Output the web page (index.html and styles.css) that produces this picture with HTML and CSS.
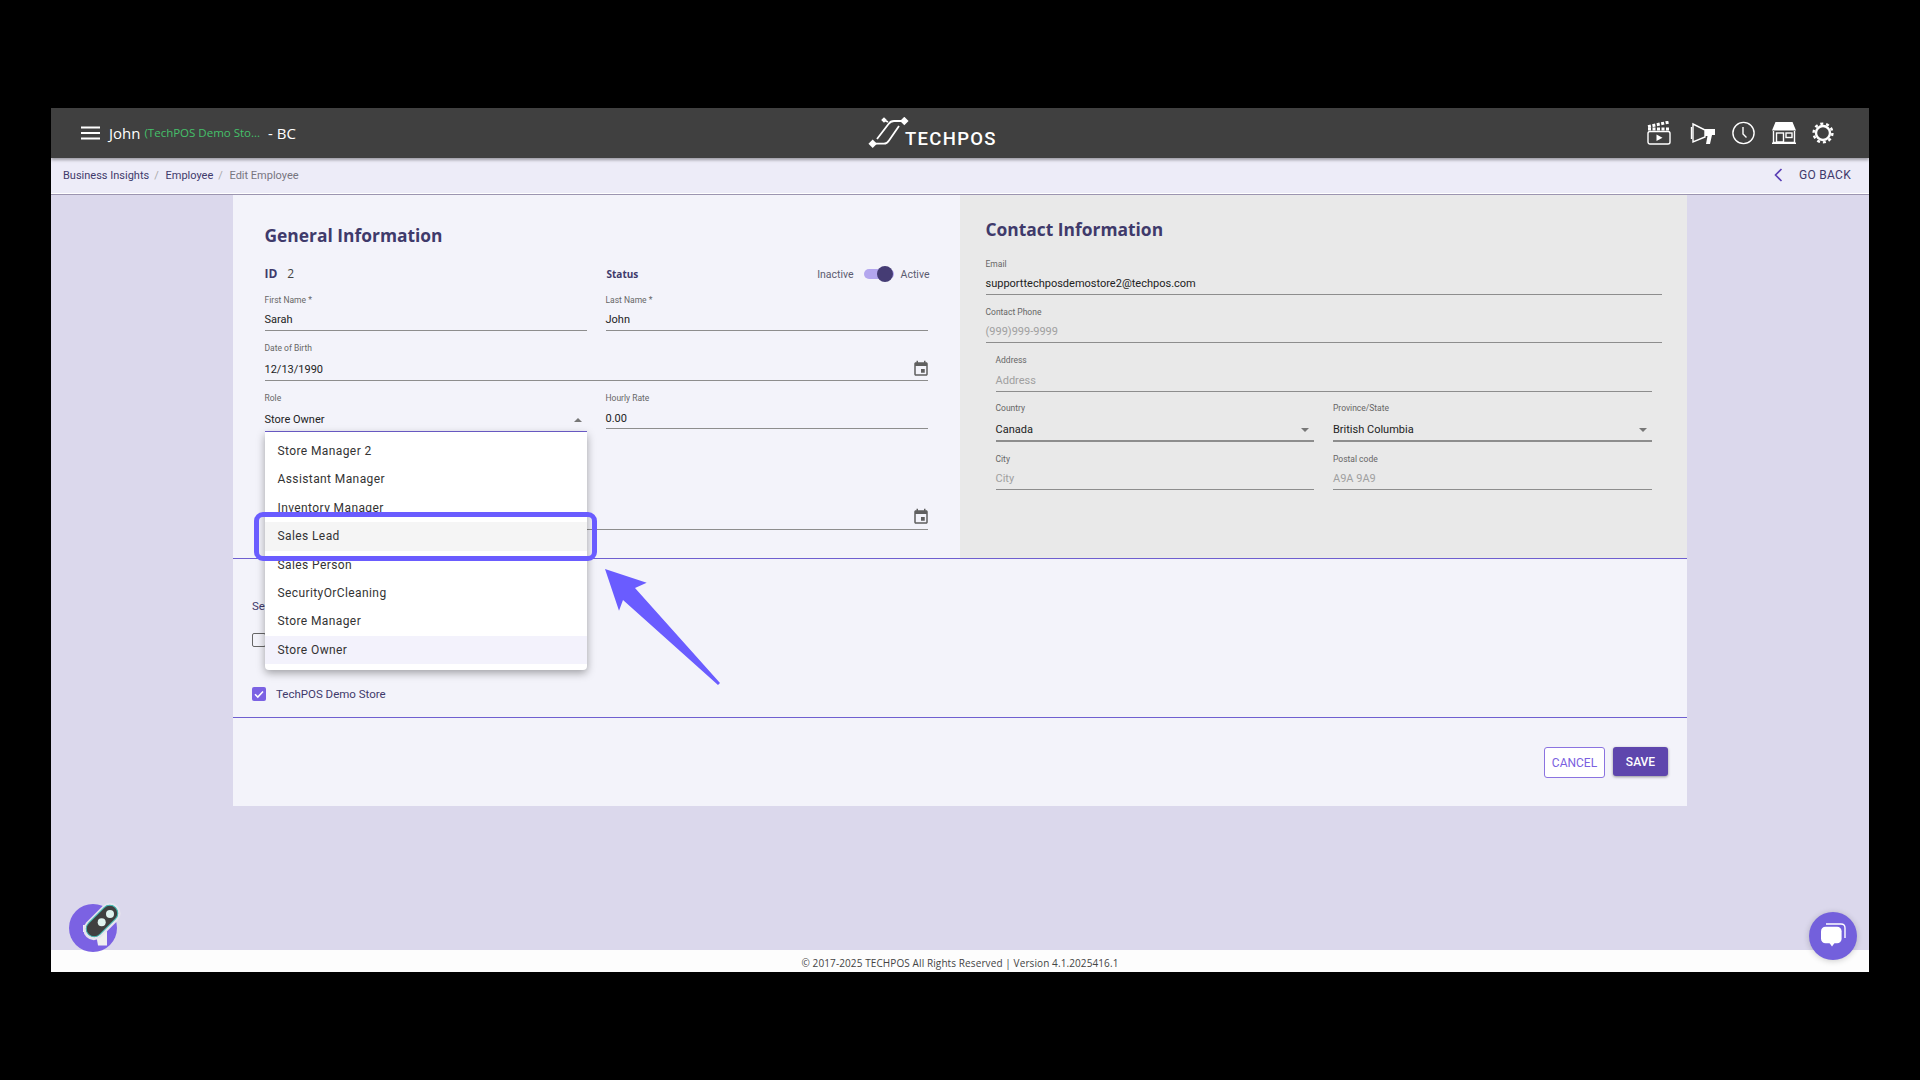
FILE: index.html
```html
<!DOCTYPE html>
<html lang="en">
<head>
<meta charset="utf-8"/>
<title>Edit Employee</title>
<link rel="stylesheet" href="styles.css">
</head>
<body>
<div class="app">

  <!-- top bar -->
  <header class="top-bar">
    <div class="user-box">
      <svg class="menu-icon" viewBox="0 0 19 14"><path d="M0 1.5h19M0 7h19M0 12.5h19"></path></svg>
      <span class="user-name">John</span>
      <span class="store-name">(TechPOS Demo Sto...</span>
      <span class="user-region">- BC</span>
    </div>
    <div class="logo">
      <svg class="logo-mark" viewBox="5 5 43 34">
        <path d="M10.7 31.7H22Q25 31.7 27 28.5L37 14M42 9H32Q28.5 9 26.5 12L15 27M22 8L26 10"></path>
        <rect x="7.7" y="28.7" width="6" height="6" transform="rotate(45 10.7 31.7)"></rect>
        <rect x="39.3" y="6" width="6" height="6" transform="rotate(45 42.3 9)"></rect>
        <rect x="20" y="6" width="4" height="4" transform="rotate(45 22 8)"></rect>
      </svg>
      <span class="logo-text">TECHPOS</span>
    </div>
    <div class="top-icons">
      <svg class="icon-clapper" viewBox="0 0 24 24">
        <rect class="line" x="1" y="10.5" width="22" height="12.5" rx="2"></rect>
        <path class="dash" d="M1 8h22"></path>
        <path class="dash" d="M1 5.6L22.5 1"></path>
        <path class="solid" d="M9.5 13.5l6 3.2-6 3.2z"></path>
      </svg>
      <svg class="icon-mega" viewBox="0 0 28 24">
        <path class="line" d="M6 3L18 9V16L6 21Z"></path>
        <path class="line" d="M4.5 6V18"></path>
        <path class="solid" d="M18 8H28V14H25L23 23H19L20.5 15H18Z"></path>
      </svg>
      <svg class="icon-clock" viewBox="0 0 25 24">
        <circle class="line" cx="12.5" cy="12" r="10.6"></circle>
        <path class="line" d="M12 6V13L15.5 16.5"></path>
      </svg>
      <svg class="icon-store" viewBox="0 0 24 22">
        <path class="solid" d="M3.5 0H20.5L24 8.5H0Z"></path>
        <path class="line" d="M1.5 9V20.5H22.5V9"></path>
        <rect class="line" x="4.5" y="11" width="7" height="9"></rect>
        <rect class="line" x="14" y="11" width="6" height="4.5"></rect>
        <path class="solid" d="M0 20.5H24V22H0Z"></path>
      </svg>
      <svg class="icon-gear" viewBox="0 0 22 22">
        <circle class="ring" cx="11" cy="11" r="7"></circle>
        <circle class="teeth" cx="11" cy="11" r="9.4"></circle>
      </svg>
    </div>
  </header>

  <!-- breadcrumb -->
  <div class="crumb-bar">
    <div class="crumbs">
      <span>Business Insights</span><i>/</i>
      <span class="crumb-gap">Employee</span><i>/</i>
      <span class="crumb-current">Edit Employee</span>
    </div>
    <div class="go-back">
      <svg viewBox="0 0 9 14"><path d="M7.5 1L1.5 7l6 6"></path></svg>
      <span>GO BACK</span>
    </div>
  </div>

  <main class="page">
    <div class="panel">
      <div class="info-row">

        <section class="general">
          <h2>General Information</h2>
          <div class="meta-row">
            <div class="meta-id"><b>ID</b><span>2</span></div>
            <div class="meta-status">
              <b>Status</b>
              <span class="toggle-text toggle-first">Inactive</span>
              <span class="toggle"><span class="toggle-thumb"></span></span>
              <span class="toggle-text">Active</span>
            </div>
          </div>

          <div class="two-col first-row">
            <div class="field">
              <label>First Name *</label>
              <div class="value tight">Sarah</div>
            </div>
            <div class="field">
              <label>Last Name *</label>
              <div class="value tight">John</div>
            </div>
          </div>

          <div class="field">
            <label>Date of Birth</label>
            <div class="value loose">12/13/1990
              <svg class="calendar" viewBox="0 0 24 24"><path d="M17 12h-5v5h5v-5zM16 1v2H8V1H6v2H5c-1.11 0-1.99.9-1.99 2L3 19c0 1.1.89 2 2 2h14c1.1 0 2-.9 2-2V5c0-1.1-.9-2-2-2h-1V1h-2zm3 18H5V8h14v11z"></path></svg>
            </div>
          </div>

          <div class="two-col role-row">
            <div class="field role-field">
              <label>Role</label>
              <div class="value loose">Store Owner<span class="caret caret-up"></span></div>
              <ul class="role-menu">
                <li>Store Manager 2</li>
                <li>Assistant Manager</li>
                <li>Inventory Manager</li>
                <li class="hovered">Sales Lead</li>
                <li>Sales Person</li>
                <li>SecurityOrCleaning</li>
                <li>Store Manager</li>
                <li class="selected">Store Owner</li>
              </ul>
            </div>
            <div class="field rate-field">
              <label>Hourly Rate</label>
              <div class="value">0.00</div>
            </div>
          </div>

          <div class="field date-field">
            <div class="value">
              <svg class="calendar" viewBox="0 0 24 24"><path d="M17 12h-5v5h5v-5zM16 1v2H8V1H6v2H5c-1.11 0-1.99.9-1.99 2L3 19c0 1.1.89 2 2 2h14c1.1 0 2-.9 2-2V5c0-1.1-.9-2-2-2h-1V1h-2zm3 18H5V8h14v11z"></path></svg>
            </div>
          </div>
        </section>

        <section class="contact">
          <h2>Contact Information</h2>
          <div class="field email-field">
            <label>Email</label>
            <div class="value tight">supporttechposdemostore2@techpos.com</div>
          </div>
          <div class="field">
            <label>Contact Phone</label>
            <div class="value tight muted">(999)999-9999</div>
          </div>
          <div class="address">
            <div class="field">
              <label>Address</label>
              <div class="value muted">Address</div>
            </div>
            <div class="two-col">
              <div class="field select-field">
                <label>Country</label>
                <div class="value loose">Canada<span class="caret"></span></div>
              </div>
              <div class="field select-field">
                <label>Province/State</label>
                <div class="value loose">British Columbia<span class="caret"></span></div>
              </div>
            </div>
            <div class="two-col">
              <div class="field">
                <label>City</label>
                <div class="value tight muted">City</div>
              </div>
              <div class="field">
                <label>Postal code</label>
                <div class="value tight muted">A9A 9A9</div>
              </div>
            </div>
          </div>
        </section>
      </div>

      <section class="stores">
        <div class="stores-title">Select Store</div>
        <div class="store-row first-store"><span class="check"></span></div>
        <div class="store-row">
          <span class="check checked"><svg viewBox="0 0 14 14"><path d="M3 7.2l2.8 2.8L11 4.5"></path></svg></span>
          <span>TechPOS Demo Store</span>
        </div>
      </section>

      <div class="actions">
        <button class="btn-cancel">CANCEL</button>
        <button class="btn-save">SAVE</button>
      </div>
    </div>
  </main>

  <footer class="bottom-bar">© 2017-2025 TECHPOS All Rights Reserved | Version 4.1.2025416.1</footer>

  <!-- floating buttons -->
  <svg class="rocket" viewBox="0 0 60 60">
    <circle cx="30" cy="30" r="24" fill="#7b62e3"></circle>
    <rect x="20" y="27" width="3" height="7" fill="#f0eef8"></rect>
    <path d="M33 36L44 33V47.5H35Z" fill="#efefef"></path>
    <rect x="17" y="13" width="44" height="21" rx="10.5" transform="rotate(-45 39 23.5)" fill="#e6e4ee"></rect>
    <rect x="20" y="15" width="38" height="16" rx="8" transform="rotate(-45 39 23)" fill="#404040" stroke="#3fb8b0" stroke-width="1"></rect>
    <circle cx="38.7" cy="24.3" r="4" fill="#dff3ef"></circle>
    <circle cx="47" cy="16" r="4" fill="#dff3ef"></circle>
  </svg>
  <div class="chat-button">
    <svg viewBox="0 0 48 48">
      <path d="M17 12H32Q36 12 36 16V26" fill="none" stroke="#fff" stroke-width="1.4"></path>
      <rect x="12" y="14.7" width="20.6" height="16.5" rx="4.5" fill="#fff"></rect>
      <path d="M20.5 31h5L23 34.5z" fill="#fff"></path>
    </svg>
  </div>

  <!-- annotation -->
  <div class="mark-box"></div>
  <svg class="mark-arrow" viewBox="0 0 120 120">
    <path d="M2 2L43.7 15.7L32 21L117 116L115 118L20 33L16 43.7Z"></path>
  </svg>
</div>
</body>
</html>
```

FILE: styles.css
```css
* {
  box-sizing: border-box;
}

body {
  margin: 0;
  height: 1080px;
  padding: 108px 51px;
  background: #000;
  font-family: Roboto, "Liberation Sans", sans-serif;
  overflow: hidden;
}

.app {
  position: relative;
  display: flex;
  flex-direction: column;
  width: 1818px;
  height: 864px;
  background: #dbd8ec;
}

/* top bar */
.top-bar {
  display: flex;
  height: 50px;
  padding: 0 35px 0 30px;
  background: #404040;
  box-shadow: 0 2px 3px rgba(0, 0, 0, 0.35);
  position: relative;
  z-index: 2;
}

.user-box {
  display: flex;
  align-items: center;
  width: 786px;
  color: #fff;
  font-family: "Open Sans", sans-serif;
  font-size: 15px;
  font-weight: 500;
}

.menu-icon {
  width: 19px;
  height: 14px;
  margin: 0 9px 0 0;
}

.menu-icon path {
  stroke: #fff;
  stroke-width: 2;
}

.store-name {
  margin: -2px 8px 0 4px;
  color: #45c06a;
  font-size: 11.5px;
  font-weight: 400;
}

.logo {
  display: flex;
  align-items: flex-start;
  padding-top: 9px;
}

.logo-mark {
  width: 43px;
  height: 34px;
  margin-right: -5px;
}

.logo-mark path {
  fill: none;
  stroke: #fff;
  stroke-width: 1.8;
}

.logo-mark rect {
  fill: #fff;
}

.logo-text {
  margin-top: 14px;
  color: #fff;
  font-size: 18.5px;
  font-weight: 500;
  line-height: 16px;
  letter-spacing: 1.3px;
}

.top-icons {
  display: flex;
  align-items: center;
  gap: 16px;
  margin-left: auto;
}

.top-icons .line {
  fill: none;
  stroke: #fff;
  stroke-width: 1.4;
}

.top-icons .solid {
  fill: #fff;
}

.top-icons .dash {
  fill: none;
  stroke: #fff;
  stroke-width: 3;
  stroke-dasharray: 3 1.5;
}

.icon-clapper {
  width: 24px;
  height: 24px;
}

.icon-mega {
  width: 28px;
  height: 24px;
}

.icon-clock {
  width: 25px;
  height: 24px;
}

.icon-store {
  width: 24px;
  height: 22px;
}

.icon-gear {
  width: 22px;
  height: 22px;
}

.icon-gear .ring {
  fill: none;
  stroke: #fff;
  stroke-width: 2.4;
}

.icon-gear .teeth {
  fill: none;
  stroke: #fff;
  stroke-width: 2.4;
  stroke-dasharray: 3 2.9;
}

/* breadcrumb */
.crumb-bar {
  display: flex;
  align-items: center;
  justify-content: space-between;
  height: 37px;
  padding: 0 18px 2px 12px;
  background: #edecf8;
  border-bottom: 1px solid #9c95b0;
  box-shadow: inset 0 -1px 0 #fff;
  font-size: 11px;
  color: #3f3a6b;
}

.crumbs i {
  margin-left: 5px;
  color: #aaa;
  font-style: normal;
}

.crumb-gap {
  margin-left: 4px;
}

.crumb-current {
  margin-left: 4px;
  color: #77757f;
}

.go-back {
  display: flex;
  align-items: center;
  gap: 16px;
  font-size: 12px;
  letter-spacing: 0.3px;
}

.go-back svg {
  width: 9px;
  height: 14px;
}

.go-back path {
  fill: none;
  stroke: #5a3fb5;
  stroke-width: 1.6;
}

/* main panel */
.page {
  flex: 1;
  padding-left: 182px;
}

.panel {
  width: 1454px;
  height: 611px;
  background: #f3f3fa;
}

.info-row {
  display: grid;
  grid-template-columns: 727px 727px;
  height: 364px;
  border-bottom: 1px solid #6f5fd0;
}

h2 {
  margin: 0;
  color: #3f3a6b;
  font-family: "Open Sans", sans-serif;
  font-size: 17.4px;
  font-weight: 700;
  line-height: 22px;
}

.general {
  padding: 29px 32.5px 0 31.5px;
}

.contact {
  padding: 23px 25.5px 0;
  background: #e9e9e9;
}

.meta-row {
  display: grid;
  grid-template-columns: 323px 323px;
  column-gap: 19px;
  margin-top: 18px;
  height: 20px;
  align-items: center;
  color: #3f3a6b;
  font-family: "Open Sans", sans-serif;
}

.meta-id {
  margin-top: -2px;
  font-size: 12px;
}

.meta-id span {
  margin-left: 10px;
  color: #444;
}

.meta-status {
  display: flex;
  align-items: center;
  font-size: 10px;
}

.toggle-text {
  font-family: Roboto, sans-serif;
  font-size: 10.5px;
  color: #5b5b70;
}

.toggle-first {
  margin-left: auto;
}

.toggle {
  position: relative;
  width: 30px;
  height: 10px;
  margin: 0 7px 0 10px;
  border-radius: 5px;
  background: #b3a6ee;
}

.toggle-thumb {
  position: absolute;
  top: -3px;
  right: 1px;
  width: 16px;
  height: 16px;
  border-radius: 50%;
  background: #453c74;
}

.two-col {
  display: grid;
  grid-template-columns: 1fr 1fr;
  column-gap: 19px;
}

.first-row {
  margin-top: 10px;
}

.first-row .field {
  margin-top: 0;
}

.field {
  margin-top: 11px;
  padding-bottom: 3px;
  border-bottom: 1px solid #8d8d8d;
}

.field label {
  display: block;
  height: 12px;
  color: #666;
  font-size: 8.5px;
  line-height: 12px;
}

.value {
  display: flex;
  align-items: center;
  justify-content: space-between;
  height: 16px;
  margin-top: 6px;
  padding-top: 2px;
  color: #222;
  font-size: 11px;
  line-height: 14px;
}

.value.tight {
  margin-top: 5px;
}

.value.loose {
  margin-top: 7px;
}

.value.muted {
  color: #a0a0a0;
}

.calendar {
  flex: none;
  width: 18px;
  height: 18px;
  margin: -2px -2px 0 0;
  fill: #5f5f5f;
}

.caret {
  width: 0;
  height: 0;
  margin-right: 5px;
  border-left: 4px solid transparent;
  border-right: 4px solid transparent;
  border-top: 4px solid #777;
}

.caret-up {
  border-top: none;
  border-bottom: 4px solid #777;
}

.role-row {
  align-items: start;
}

.role-field {
  position: relative;
  padding-bottom: 4px;
  border-bottom: 1px solid #6f5fd0;
}

.rate-field {
  padding-bottom: 2px;
}

.role-menu {
  position: absolute;
  top: calc(100% + 1px);
  left: 0;
  right: 0;
  z-index: 5;
  margin: 0;
  padding: 5px 0 6px;
  list-style: none;
  background: #fff;
  border-radius: 0 0 4px 4px;
  box-shadow: 0 3px 8px rgba(0, 0, 0, 0.35);
}

.role-menu li {
  height: 28.4px;
  padding-left: 13px;
  color: #333;
  font-size: 12px;
  line-height: 28.4px;
  letter-spacing: 0.4px;
}

.role-menu .hovered {
  background: #f5f5f5;
}

.role-menu .selected {
  background: #f3f2fc;
}

.date-field {
  margin-top: 77px;
  padding-bottom: 4px;
}

.date-field .value {
  justify-content: flex-end;
}

.email-field {
  margin-top: 18px;
}

.address {
  padding: 0 10px;
}

.select-field {
  padding-bottom: 3px;
  border-bottom-width: 2px;
  margin-top: 10px;
}

/* store list */
.stores {
  height: 159px;
  padding: 39px 0 0 19px;
  border-bottom: 1px solid #6f5fd0;
  color: #3f3a6b;
  font-size: 11.5px;
}

.stores-title {
  line-height: 16px;
}

.store-row {
  display: flex;
  align-items: center;
  gap: 10px;
  height: 14px;
}

.first-store {
  margin: 19px 0 40px;
}

.check {
  width: 14px;
  height: 14px;
  border: 1.5px solid #666;
  border-radius: 2px;
}

.check.checked {
  border: none;
  background: #7b62e3;
}

.check svg {
  display: block;
}

.check path {
  fill: none;
  stroke: #fff;
  stroke-width: 1.6;
}

/* buttons */
.actions {
  display: flex;
  justify-content: flex-end;
  align-items: flex-start;
  gap: 8px;
  padding: 29px 19px 0 0;
}

.actions button {
  border-radius: 3px;
  font-family: Roboto, sans-serif;
  font-size: 12px;
  cursor: pointer;
}

.btn-cancel {
  width: 61px;
  height: 31px;
  background: #fff;
  border: 1px solid #8b73e0;
  color: #7b5fe0;
}

.btn-save {
  width: 55px;
  height: 29px;
  background: #5e46ad;
  border: none;
  color: #fff;
  font-weight: 500;
  box-shadow: 0 1px 3px rgba(0, 0, 0, 0.4);
}

.bottom-bar {
  display: flex;
  align-items: center;
  justify-content: center;
  height: 22px;
  padding-top: 3px;
  background: #fdfdfd;
  color: #444;
  font-family: "Open Sans", sans-serif;
  font-size: 10px;
  letter-spacing: 0.1px;
}

/* floating things */
.rocket {
  position: absolute;
  left: 12px;
  top: 790px;
  width: 60px;
  height: 60px;
}

.chat-button {
  position: absolute;
  left: 1758px;
  top: 804px;
  width: 48px;
  height: 48px;
  border-radius: 50%;
  background: #7360dc;
  box-shadow: 0 1px 6px rgba(0, 0, 0, 0.2);
}

.chat-button svg {
  display: block;
}

/* annotation over the screenshot */
.mark-box {
  position: absolute;
  left: 203px;
  top: 404px;
  width: 343px;
  height: 49px;
  z-index: 6;
  border: 5px solid #6a5cff;
  border-radius: 9px;
}

.mark-arrow {
  position: absolute;
  left: 552px;
  top: 459px;
  width: 120px;
  height: 120px;
  z-index: 6;
}

.mark-arrow path {
  fill: #6a5cff;
}
```
